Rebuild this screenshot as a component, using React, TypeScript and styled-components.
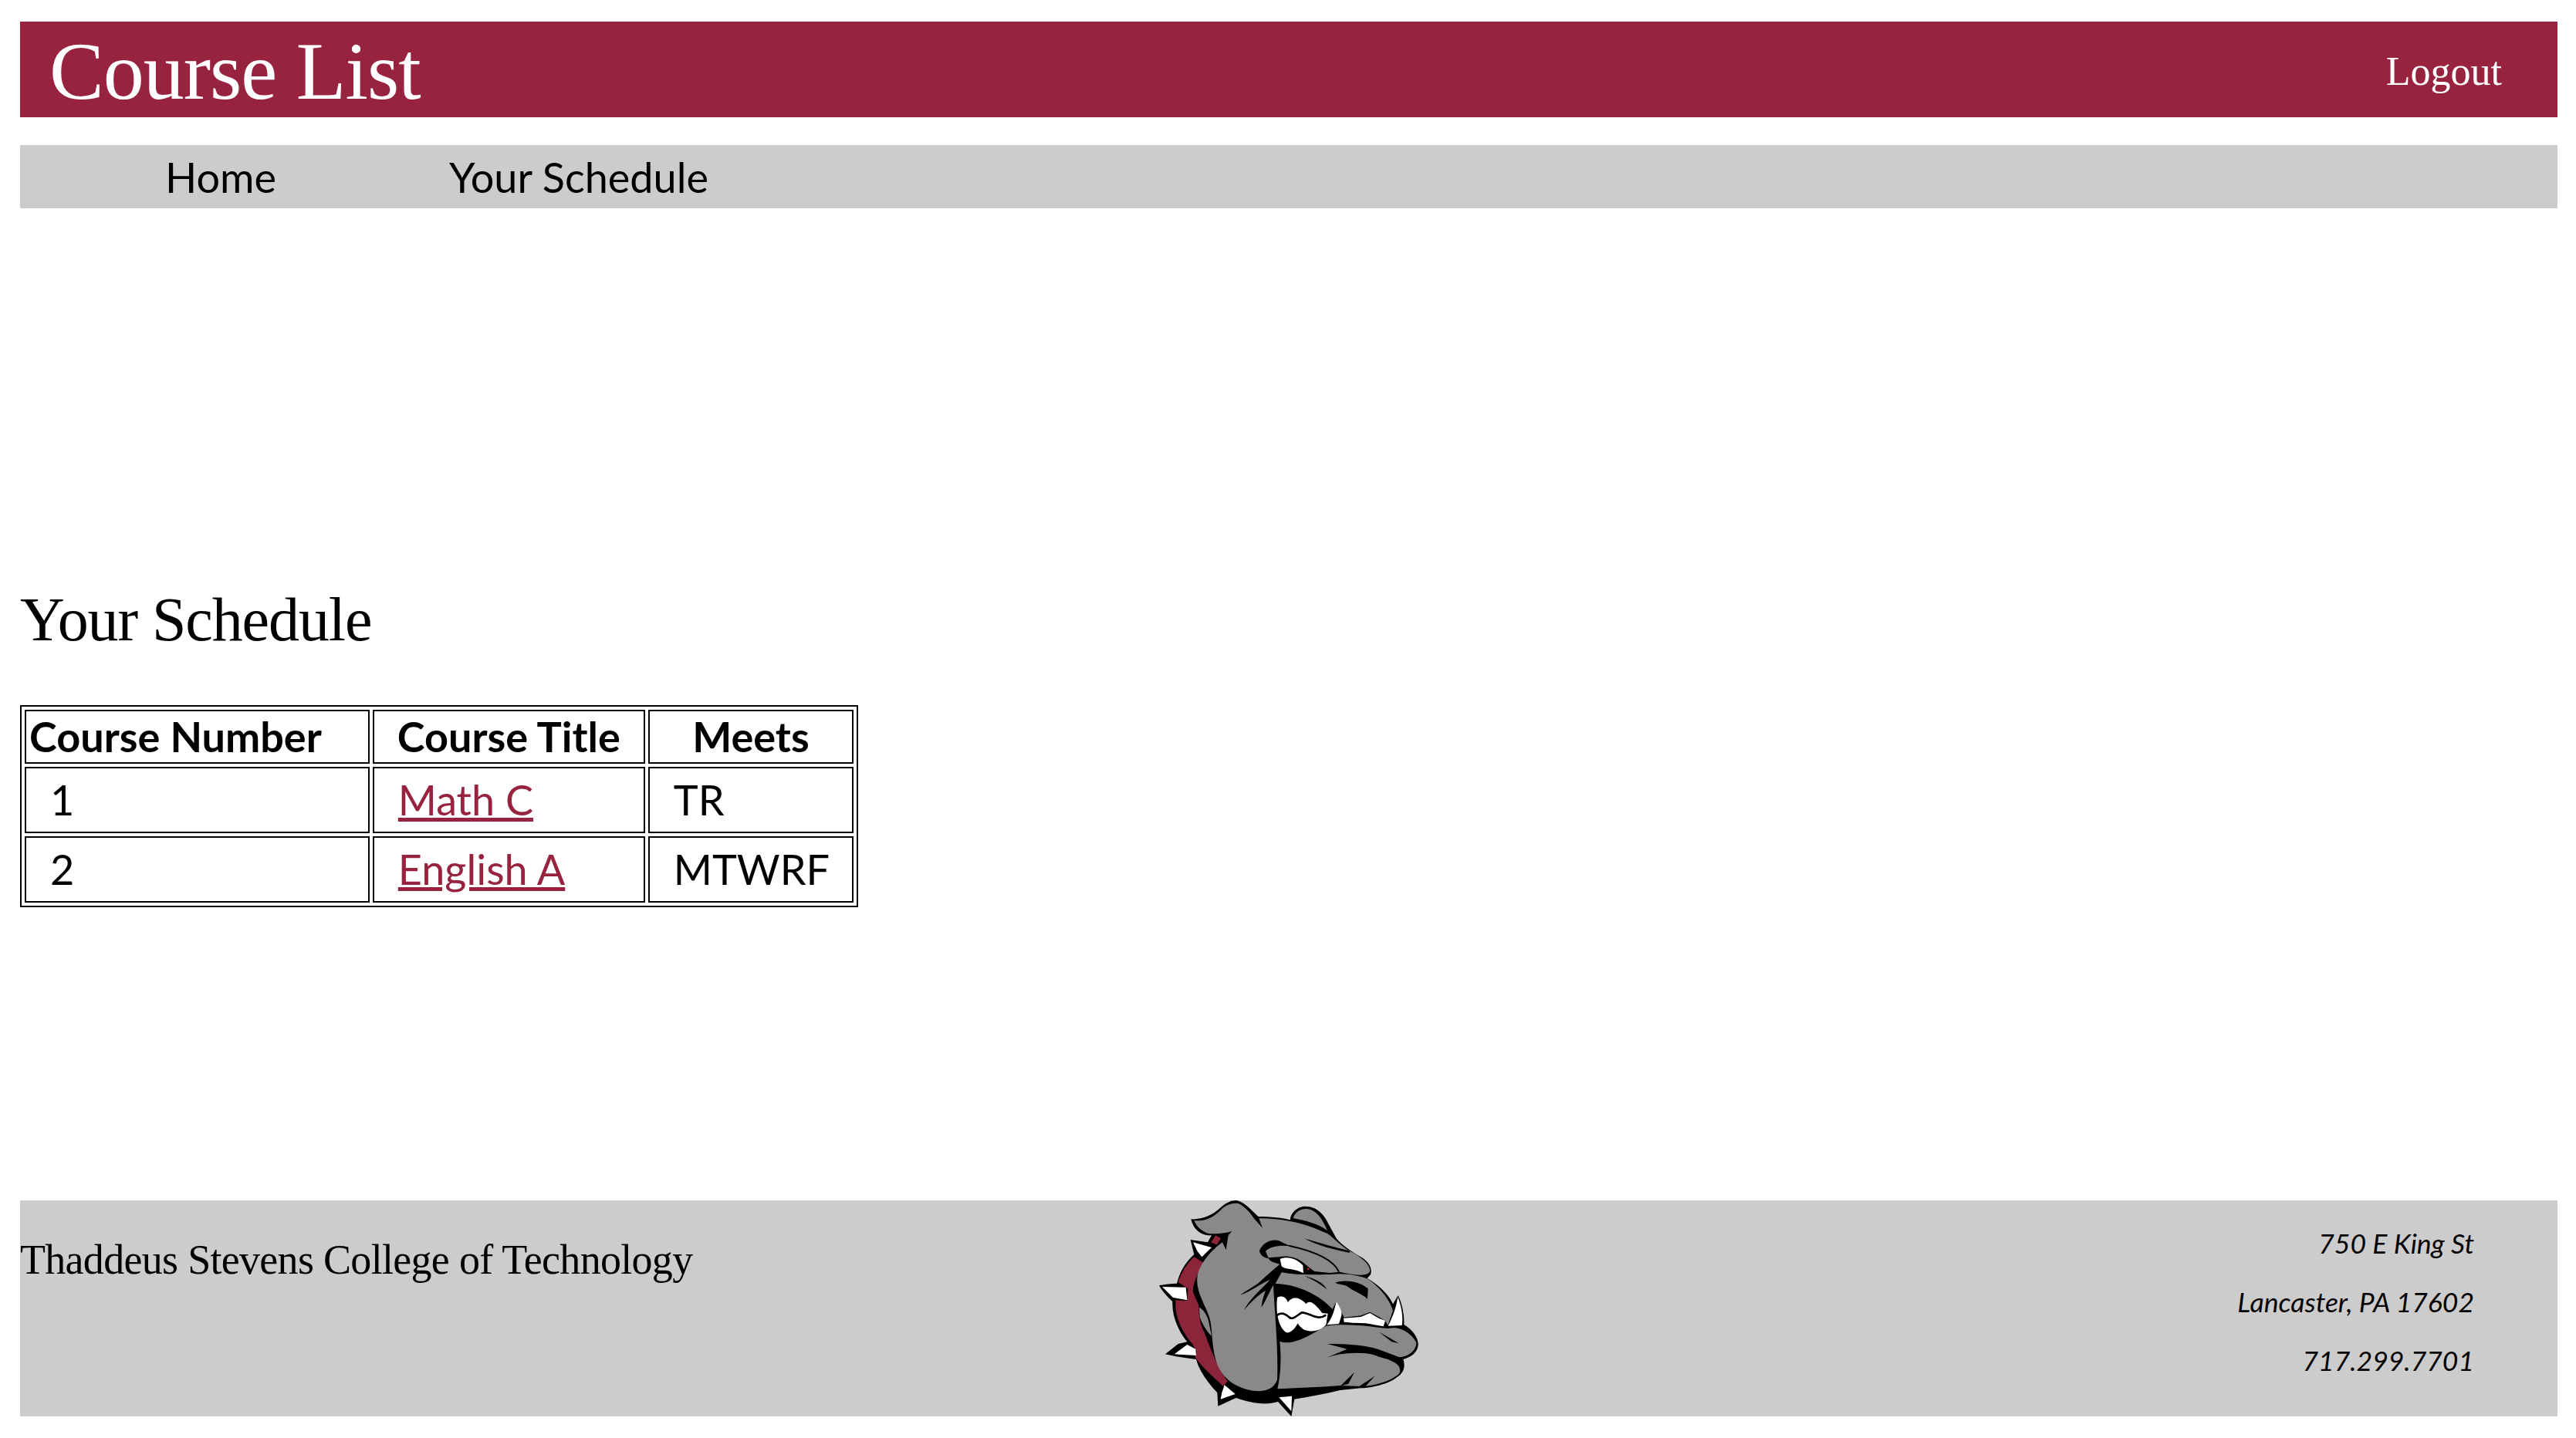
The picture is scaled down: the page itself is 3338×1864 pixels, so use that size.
import styled, { createGlobalStyle } from 'styled-components';

const courses = [
  { number: 1, title: 'Math C', meets: 'TR' },
  { number: 2, title: 'English A', meets: 'MTWRF' },
];

const GREY = '#8a888a';

const Bulldog = () => (
  <LogoSvg viewBox="90 42 1020 840" aria-label="Bulldog logo">
    {/* black silhouette */}
    <path
      fill="#000"
      d="M395 42 C425 45 460 85 482 105 C530 105 580 110 606 118 C605 95 630 65 665 65 C710 65 740 100 755 135 L785 190 C810 220 850 245 885 265 C915 285 925 310 918 330 L905 345 C940 365 985 400 1005 445 L1025 412 C1040 440 1050 490 1048 525 C1080 545 1105 575 1103 605 C1100 635 1075 650 1045 660 C1055 690 1045 715 1020 730 C990 755 930 770 880 772 L800 780 C740 795 680 805 622 815 L610 882 L558 825 C510 840 450 830 395 810 L325 842 L322 790 C280 745 250 700 240 660 C200 655 160 650 120 640 L170 600 L205 592 C170 550 145 490 148 435 C125 415 108 395 96 373 C120 368 145 366 165 365 C175 325 195 285 232 252 L218 195 L285 205 L300 178 C265 182 230 160 220 115 C260 118 305 100 335 70 C355 52 375 42 395 42 Z"
    />
    {/* ears */}
    <path
      fill={GREY}
      d="M232 120 C270 125 305 110 335 80 C355 58 385 50 405 55 C430 65 460 100 472 125 L400 150 C385 165 350 172 290 172 C255 160 240 140 232 120 Z"
    />
    <path fill={GREY} d="M618 108 C625 88 645 74 670 75 C705 78 730 110 750 160 C720 135 660 118 618 112 Z" />
    {/* collar */}
    <path
      fill="#8b2539"
      d="M315 178 L336 190 L320 215 L298 205 Z M232 262 L270 285 C245 325 225 370 228 400 L250 450 C250 500 258 530 272 555 C285 590 320 690 362 745 L345 765 C310 730 265 695 235 650 L242 630 L225 600 C190 560 155 500 160 430 L205 432 L208 385 L170 360 C180 325 205 285 232 262 Z"
    />
    {/* jowl gap below the collar */}
    <path fill={GREY} d="M252 458 C275 470 288 500 292 530 L300 570 C280 550 262 520 254 495 Z" />
    {/* head and cheek */}
    <path
      fill={GREY}
      d="M245 335 C255 285 300 235 342 205 L356 235 L365 178 C380 160 395 145 410 132 L425 105 L470 118 L498 150 L484 112 C550 110 640 125 700 150 L752 172 C770 185 810 225 835 238 C880 260 915 290 916 315 C912 335 880 338 798 320 L760 324 L700 318 C680 305 670 295 655 283 C630 262 590 255 560 262 L520 265 C525 280 545 285 565 290 L530 320 L480 365 L410 410 C450 398 490 365 527 350 C505 378 450 420 425 470 C450 440 480 410 510 393 C500 420 495 440 494 458 C510 435 525 395 540 372 C545 480 560 620 555 740 C540 780 500 787 460 782 C390 770 345 735 322 680 C300 620 305 565 295 510 C285 460 235 400 245 335 Z"
    />
    {/* brow and forehead lines */}
    <path fill="#000" d="M486 238 C495 210 530 190 560 198 L605 220 C565 215 525 222 510 240 L522 268 C500 265 488 252 486 238 Z" />
    <path fill="none" stroke="#000" strokeWidth="6" d="M600 218 C680 235 770 265 795 320" />
    <path fill="#000" d="M660 190 C720 208 790 228 835 238 L838 246 C780 235 710 218 660 190 Z" />
    <path fill="#000" d="M700 142 L755 162 L775 185 C750 168 725 152 700 142 Z" />
    {/* upper muzzle */}
    <path
      fill={GREY}
      d="M572 322 C640 335 710 330 760 330 C820 322 880 335 908 348 C955 380 990 425 1005 470 L985 528 L975 510 L950 495 L915 476 L880 490 L815 497 L785 435 L770 465 C720 410 640 370 548 365 Z"
    />
    <path fill="#000" d="M660 335 C695 345 735 360 748 388 C720 365 690 348 660 335 Z" />
    <path fill="#000" d="M780 362 C810 350 870 352 908 385 L906 425 C885 405 850 395 825 375 C810 368 795 370 780 362 Z" />
    {/* lower jaw */}
    <path
      fill={GREY}
      d="M565 590 C620 610 690 560 745 530 C820 520 900 530 985 540 C1040 528 1080 565 1096 595 C1095 630 1062 650 1030 652 L950 622 C900 605 830 600 750 600 L826 620 L745 655 C790 635 900 625 950 650 C1025 668 1040 690 1030 715 C1000 745 930 765 880 765 L800 762 C720 768 620 772 556 775 C568 720 572 660 565 590 Z"
    />
    <path fill="#000" d="M950 553 L1028 598 L1000 592 Z" />
    <path fill="#000" d="M800 764 L855 710 L832 755 Z M875 764 L935 725 L895 768 Z" />
    {/* eye */}
    <path fill="#fff" d="M566 270 C590 258 630 265 655 295 L657 325 C620 305 585 312 572 298 Z" />
    <circle cx="676" cy="309" r="4" fill="#e02020" />
    {/* teeth */}
    <path
      fill="#fff"
      d="M555 420 C575 410 588 418 597 438 C612 415 640 415 668 445 C682 425 705 448 730 480 L752 482 L745 525 C730 545 695 558 660 545 C650 540 640 530 635 520 C625 540 605 562 590 555 C565 540 548 490 555 420 Z"
    />
    <path fill="none" stroke="#000" strokeWidth="8" d="M553 490 C570 475 585 482 600 495 C615 512 635 485 652 478 C685 480 710 512 745 488" />
    <path fill="#fff" d="M785 435 C798 455 808 475 805 490 L795 522 L748 526 C770 500 778 465 785 435 Z" />
    <path fill="#fff" d="M813 500 L880 495 L915 480 L950 500 L975 510 L968 532 L900 520 L850 518 L815 515 Z" />
    <path fill="#fff" d="M1024 418 C1040 460 1045 500 1040 528 L986 530 C1005 495 1018 455 1024 418 Z" />
    {/* collar spikes */}
    <path fill="#fff" d="M228 205 L300 225 L262 262 L245 240 Z" />
    <path fill="#fff" d="M108 378 L200 380 L205 430 L150 420 Z" />
    <path fill="#fff" d="M155 640 L205 603 L238 620 L240 645 Z" />
    <path fill="#fff" d="M350 760 L392 795 L335 815 L340 790 Z" />
    <path fill="#fff" d="M562 808 L612 803 L610 862 Z" />
  </LogoSvg>
);

const App = () => (
  <>
    <GlobalStyle />
    <Page>
      <Header>
        <Title>Course List</Title>
        <Logout href="#">Logout</Logout>
      </Header>
      <Nav>
        <NavLink href="#">Home</NavLink>
        <NavLink href="#">Your Schedule</NavLink>
      </Nav>
      <Main>
        <Heading>Your Schedule</Heading>
        <ScheduleTable>
          <thead>
            <tr>
              <HeadCell $first>Course Number</HeadCell>
              <HeadCell>Course Title</HeadCell>
              <HeadCell>Meets</HeadCell>
            </tr>
          </thead>
          <tbody>
            {courses.map((course) => (
              <tr key={course.number}>
                <Cell>{course.number}</Cell>
                <Cell>
                  <CourseLink href="#">{course.title}</CourseLink>
                </Cell>
                <Cell>{course.meets}</Cell>
              </tr>
            ))}
          </tbody>
        </ScheduleTable>
      </Main>
      <Footer>
        <Brand>Thaddeus Stevens College of Technology</Brand>
        <Bulldog />
        <Address>
          <AddressLine>750 E King St</AddressLine>
          <AddressLine>Lancaster, PA 17602</AddressLine>
          <AddressLine>717.299.7701</AddressLine>
        </Address>
      </Footer>
    </Page>
  </>
);

export default App;

const GlobalStyle = createGlobalStyle`
  html, body {
    margin: 0;
    padding: 0;
    background: #fff;
  }
`;

const Page = styled.div`
  padding: 28px 24px 30px 26px;
  color: #000;
  font-family: Lato, sans-serif;
`;

const Header = styled.header`
  display: flex;
  align-items: flex-start;
  justify-content: space-between;
  height: 124px;
  padding: 6px 72px 0 38px;
  background: #97233f;
  box-sizing: border-box;
`;

const Title = styled.h1`
  margin: 0;
  color: #fff;
  font-family: "Liberation Serif", serif;
  font-size: 106px;
  font-weight: 400;
  letter-spacing: -1px;
  line-height: 118px;
`;

const Logout = styled.a`
  color: #fff;
  font-family: "Liberation Serif", serif;
  font-size: 52px;
  line-height: 118px;
  text-decoration: none;
`;

const Nav = styled.nav`
  display: flex;
  gap: 224px;
  height: 82px;
  margin-top: 36px;
  padding-left: 188px;
  background: #ccc;
`;

const NavLink = styled.a`
  color: #000;
  font-size: 54px;
  line-height: 84px;
  text-decoration: none;
`;

const Main = styled.main`
  padding-top: 488px;
`;

const Heading = styled.h2`
  margin: 0;
  font-family: "Liberation Serif", serif;
  font-size: 80px;
  font-weight: 400;
  letter-spacing: -1.1px;
  line-height: 90px;
`;

const ScheduleTable = styled.table`
  margin-top: 66px;
  border: 2px solid #000;
  border-spacing: 4px;
  border-collapse: separate;
  font-size: 54px;
`;

const HeadCell = styled.th<{ $first?: boolean }>`
  height: 66px;
  padding: 0 ${(props) => (props.$first ? '60px 0 4px' : '30px')};
  border: 2px solid #000;
  font-weight: 700;
  line-height: 66px;
  text-align: ${(props) => (props.$first ? 'left' : 'center')};
`;

const Cell = styled.td`
  height: 82px;
  padding: 0 29px 0 31px;
  border: 2px solid #000;
  line-height: 82px;
`;

const CourseLink = styled.a`
  color: #97233f;
  text-decoration: underline;
`;

const Footer = styled.footer`
  display: grid;
  grid-template-columns: 1fr auto 1fr;
  height: 280px;
  margin-top: 380px;
  background: #ccc;
`;

const Brand = styled.div`
  padding-top: 44px;
  font-family: "Liberation Serif", serif;
  font-size: 54px;
  letter-spacing: -0.7px;
  line-height: 66px;
`;

const LogoSvg = styled.svg`
  display: block;
  width: 340px;
  height: 280px;
`;

const Address = styled.div`
  padding: 34px 108px 0 0;
  font-size: 35.5px;
  font-style: italic;
  text-align: right;
`;

const AddressLine = styled.p`
  margin: 0 0 33px;
  line-height: 43px;
`;
